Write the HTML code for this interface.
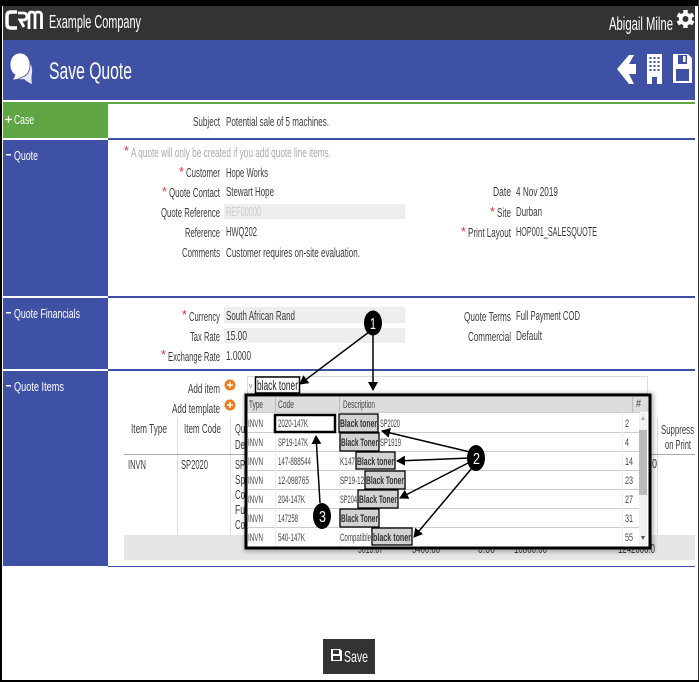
<!DOCTYPE html>
<html><head><meta charset="utf-8"><title>Save Quote</title>
<style>
html,body{margin:0;padding:0;background:#fff}
svg{display:block}
text{font-family:"Liberation Sans",sans-serif;font-size:12.5px;fill:#3c3c3c}
.w{fill:#fff}
.r{fill:#d33}
.s{font-size:11px;fill:#444}
.b{font-weight:bold;font-size:11px;fill:#333}
.n{font-size:16px;fill:#fff}
</style></head><body>
<svg width="699" height="682" viewBox="0 0 699 682" xmlns="http://www.w3.org/2000/svg">
<defs>
<marker id="a" markerWidth="9" markerHeight="11" refX="8" refY="5" orient="auto" markerUnits="userSpaceOnUse"><path d="M0 0L9 5L0 10Z" fill="#000"/></marker>
<filter id="sh" x="-5%" y="-5%" width="110%" height="110%"><feGaussianBlur stdDeviation="2"/></filter>
</defs>
<rect width="699" height="682" fill="#fff"/>
<!-- outer frame -->
<rect x="0" y="0" width="699" height="6" fill="#000"/>
<rect x="0" y="0" width="2" height="682" fill="#000"/>
<rect x="698" y="0" width="1" height="682" fill="#333"/>
<rect x="0" y="680" width="699" height="2" fill="#000"/>
<!-- header -->
<rect x="3" y="6" width="692" height="34" fill="#333"/>
<rect x="3" y="40" width="692" height="60" fill="#3f51a5"/>
<!-- logo -->
<path d="M17 12H11Q7 12 7 16V24Q7 28 11 28H17" fill="none" stroke="#fff" stroke-width="3.5"/>
<path d="M18 13H23Q27 13 27 16.500Q27 20 23 20H20L24 27" fill="none" stroke="#fff" stroke-width="2.800"/>
<path d="M29 29V15Q29 12 31.500 12Q35 12 35 15V29M35 15Q35 12 38 12Q41.500 12 41.500 15V29" fill="none" stroke="#fff" stroke-width="2.800"/>
<text class="w" x="49" y="28" style="font-size:18px" textLength="92" lengthAdjust="spacingAndGlyphs">Example Company</text>
<text class="w" x="609" y="30" style="font-size:18px" textLength="64" lengthAdjust="spacingAndGlyphs">Abigail Milne</text>
<!-- gear -->
<g transform="translate(685.5 19)" fill="#fff">
<circle r="6.5"/>
<rect x="-2.200" y="-9" width="4.400" height="18"/>
<rect x="-2.200" y="-9" width="4.400" height="18" transform="rotate(60)"/>
<rect x="-2.200" y="-9" width="4.400" height="18" transform="rotate(120)"/>
<circle r="3" fill="#333"/>
</g>
<!-- chat icon -->
<path d="M27 60Q33 65 32 73Q31 78 32 84Q27 82 24 79Q18 80 14 77Z" fill="#e4e7f4"/>
<path d="M20 53C14 53 10 58 10 65C10 70 12 73 15 75Q14 78 12 80Q18 80 22 77C27 76 30 71 30 65C30 58 26 53 20 53Z" fill="#fff" stroke="#3f51a5" stroke-width=".8"/>
<text class="w" x="49" y="79" style="font-size:24px" textLength="83" lengthAdjust="spacingAndGlyphs">Save Quote</text>
<!-- arrow -->
<path d="M617 69L629 55H634L629 64H636V74H629L634 84H629Z" fill="#fff"/>
<!-- building -->
<path d="M647 54H662V84H657V77H652V84H647Z" fill="#fff"/>
<g fill="#3f51a5"><rect x="649.500" y="57" width="2" height="2"/><rect x="653.500" y="57" width="2" height="2"/><rect x="657.500" y="57" width="2" height="2"/><rect x="649.500" y="61" width="2" height="2"/><rect x="653.500" y="61" width="2" height="2"/><rect x="657.500" y="61" width="2" height="2"/><rect x="649.500" y="65" width="2" height="2"/><rect x="653.500" y="65" width="2" height="2"/><rect x="657.500" y="65" width="2" height="2"/><rect x="649.500" y="69" width="2" height="2"/><rect x="653.500" y="69" width="2" height="2"/><rect x="657.500" y="69" width="2" height="2"/></g>
<!-- save -->
<path d="M673 54H688L692 58V83H673Z" fill="#fff"/>
<rect x="678" y="55" width="9" height="9" fill="#3f51a5"/><rect x="683" y="56" width="2.500" height="6" fill="#fff"/>
<rect x="676" y="69" width="13" height="12" fill="#3f51a5"/>
<!-- sections -->
<rect x="3" y="102" width="692" height="2" fill="#5fa544"/>
<rect x="3" y="104" width="105" height="34" fill="#5fa544"/>
<rect x="108" y="138" width="587" height="2" fill="#3f51a5"/>
<rect x="3" y="140" width="105" height="156" fill="#3f51a5"/>
<rect x="108" y="296" width="587" height="2" fill="#3f51a5"/>
<rect x="3" y="298" width="105" height="71" fill="#3f51a5"/>
<rect x="108" y="369" width="587" height="2" fill="#3f51a5"/>
<rect x="3" y="371" width="105" height="195" fill="#3f51a5"/>
<rect x="108" y="566" width="587" height="1" fill="#3f51a5"/>
<path d="M5 119.500H12M8.500 116V123" stroke="#fff" stroke-width="1.300"/>
<text class="w" x="14" y="124" textLength="20" lengthAdjust="spacingAndGlyphs">Case</text>
<rect x="6" y="154" width="5" height="1.500" fill="#fff"/>
<text class="w" x="14" y="160" textLength="24" lengthAdjust="spacingAndGlyphs">Quote</text>
<rect x="6" y="312" width="5" height="1.500" fill="#fff"/>
<text class="w" x="14" y="318" textLength="66" lengthAdjust="spacingAndGlyphs">Quote Financials</text>
<rect x="6" y="385" width="5" height="1.500" fill="#fff"/>
<text class="w" x="14" y="391" textLength="50" lengthAdjust="spacingAndGlyphs">Quote Items</text>
<!-- case -->
<text x="193" y="126" textLength="27" lengthAdjust="spacingAndGlyphs">Subject</text>
<text x="226" y="126" textLength="103" lengthAdjust="spacingAndGlyphs">Potential sale of 5 machines.</text>
<!-- quote -->
<text class="r" x="124" y="155">*</text>
<text x="131" y="157" textLength="200" lengthAdjust="spacingAndGlyphs" style="fill:#aaa">A quote will only be created if you add quote line items.</text>
<text class="r" x="179" y="176">*</text>
<text x="186" y="177" textLength="34" lengthAdjust="spacingAndGlyphs">Customer</text>
<text x="226" y="177" textLength="42" lengthAdjust="spacingAndGlyphs">Hope Works</text>
<text class="r" x="162" y="196">*</text>
<text x="169" y="197" textLength="51" lengthAdjust="spacingAndGlyphs">Quote Contact</text>
<text x="226" y="196" textLength="48" lengthAdjust="spacingAndGlyphs">Stewart Hope</text>
<rect x="224" y="204" width="181" height="15" fill="#eee"/>
<text x="161" y="217" textLength="59" lengthAdjust="spacingAndGlyphs">Quote Reference</text>
<text x="226" y="216" textLength="35" lengthAdjust="spacingAndGlyphs" style="fill:#ccc">REF00000</text>
<text x="185" y="237" textLength="35" lengthAdjust="spacingAndGlyphs">Reference</text>
<text x="226" y="236" textLength="31" lengthAdjust="spacingAndGlyphs">HWQ202</text>
<text x="182" y="257" textLength="38" lengthAdjust="spacingAndGlyphs">Comments</text>
<text x="226" y="257" textLength="134" lengthAdjust="spacingAndGlyphs">Customer requires on-site evaluation.</text>
<text x="493" y="196" textLength="18" lengthAdjust="spacingAndGlyphs">Date</text>
<text x="516" y="196" textLength="42" lengthAdjust="spacingAndGlyphs">4 Nov 2019</text>
<text class="r" x="490" y="216">*</text>
<text x="497" y="217" textLength="14" lengthAdjust="spacingAndGlyphs">Site</text>
<text x="516" y="216" textLength="26" lengthAdjust="spacingAndGlyphs">Durban</text>
<text class="r" x="461" y="236">*</text>
<text x="468" y="237" textLength="43" lengthAdjust="spacingAndGlyphs">Print Layout</text>
<text x="516" y="236" textLength="81" lengthAdjust="spacingAndGlyphs">HOP001_SALESQUOTE</text>
<!-- financials -->
<rect x="224" y="307" width="181" height="16" fill="#eee"/>
<rect x="224" y="328" width="181" height="15" fill="#eee"/>
<text class="r" x="182" y="319">*</text>
<text x="189" y="321" textLength="31" lengthAdjust="spacingAndGlyphs">Currency</text>
<text x="226" y="320" textLength="69" lengthAdjust="spacingAndGlyphs">South African Rand</text>
<text x="190" y="341" textLength="30" lengthAdjust="spacingAndGlyphs">Tax Rate</text>
<text x="226" y="340" textLength="21" lengthAdjust="spacingAndGlyphs">15.00</text>
<text class="r" x="161" y="359">*</text>
<text x="168" y="361" textLength="52" lengthAdjust="spacingAndGlyphs">Exchange Rate</text>
<text x="226" y="360" textLength="25" lengthAdjust="spacingAndGlyphs">1.0000</text>
<text x="464" y="321" textLength="47" lengthAdjust="spacingAndGlyphs">Quote Terms</text>
<text x="516" y="320" textLength="64" lengthAdjust="spacingAndGlyphs">Full Payment COD</text>
<text x="468" y="341" textLength="43" lengthAdjust="spacingAndGlyphs">Commercial</text>
<text x="516" y="340" textLength="26" lengthAdjust="spacingAndGlyphs">Default</text>
<!-- items -->
<text x="188" y="393" textLength="32" lengthAdjust="spacingAndGlyphs">Add item</text>
<text x="172" y="413" textLength="48" lengthAdjust="spacingAndGlyphs">Add template</text>
<circle cx="230" cy="385" r="5.500" fill="#ee7d1e"/><path d="M227 385H233M230 382V388" stroke="#fff" stroke-width="1.500"/>
<circle cx="230" cy="405" r="5.500" fill="#ee7d1e"/><path d="M227 405H233M230 402V408" stroke="#fff" stroke-width="1.500"/>
<rect x="247.500" y="376.500" width="400" height="17" fill="#fff" stroke="#ddd"/>
<text x="249" y="388" style="font-size:7px;fill:#888">v</text>
<rect x="255.500" y="377" width="44" height="16" fill="#fff" stroke="#000" stroke-width="1.500"/>
<text x="257" y="390" textLength="41" lengthAdjust="spacingAndGlyphs" style="font-size:13.500px;fill:#222">black toner</text>
<!-- table -->
<path d="M177.500 418V535M230.500 418V535M657.500 418V535" stroke="#ddd"/>
<path d="M124 454.500H695" stroke="#aaa"/>
<text x="131" y="433" textLength="36" lengthAdjust="spacingAndGlyphs">Item Type</text>
<text x="184" y="433" textLength="37" lengthAdjust="spacingAndGlyphs">Item Code</text>
<text x="235" y="433" textLength="10" lengthAdjust="spacingAndGlyphs">Qu</text><text x="235" y="449" textLength="10" lengthAdjust="spacingAndGlyphs">De</text>
<text x="661" y="434" textLength="33" lengthAdjust="spacingAndGlyphs">Suppress</text>
<text x="665" y="449" textLength="26" lengthAdjust="spacingAndGlyphs">on Print</text>
<text x="128" y="469" textLength="18" lengthAdjust="spacingAndGlyphs">INVN</text>
<text x="181" y="469" textLength="27" lengthAdjust="spacingAndGlyphs">SP2020</text>
<text x="235" y="469" textLength="10" lengthAdjust="spacingAndGlyphs">SP</text><text x="235" y="484" textLength="10" lengthAdjust="spacingAndGlyphs">Sp</text><text x="235" y="499" textLength="10" lengthAdjust="spacingAndGlyphs">Co</text><text x="235" y="514" textLength="10" lengthAdjust="spacingAndGlyphs">Fu</text><text x="235" y="529" textLength="10" lengthAdjust="spacingAndGlyphs">Co</text>
<rect x="124" y="535" width="571" height="25" fill="#e6e6e6"/>
<text x="652" y="468" textLength="5" lengthAdjust="spacingAndGlyphs">0</text>
<text x="358" y="553" textLength="25" lengthAdjust="spacingAndGlyphs">5010.67</text>
<text x="412" y="553" textLength="28" lengthAdjust="spacingAndGlyphs">5400.00</text>
<text x="478" y="553" textLength="17" lengthAdjust="spacingAndGlyphs">0.00</text>
<text x="514" y="553" textLength="33" lengthAdjust="spacingAndGlyphs">10800.00</text>
<text x="618" y="553" textLength="37" lengthAdjust="spacingAndGlyphs">1242000.0</text>
<!-- popup -->
<rect x="244" y="393" width="410" height="159" fill="#000" opacity=".25" filter="url(#sh)"/>
<rect x="246" y="395" width="404" height="153" fill="#fff" stroke="#000" stroke-width="3"/>
<rect x="247.500" y="397" width="401" height="15" fill="#ddd"/>
<path d="M275.500 397V412M339.500 397V412M632.500 397V412" stroke="#bbb"/>
<path d="M248 412.500H640M248 432.500H640M248 451.500H640M248 470.500H640M248 489.500H640M248 508.500H640M248 527.500H640" stroke="#ccc"/>
<path d="M275.500 412V546M339.500 412V546M622.500 412V546" stroke="#eee"/>
<text class="s" x="249" y="408" textLength="14" lengthAdjust="spacingAndGlyphs">Type</text>
<text class="s" x="278" y="408" textLength="16" lengthAdjust="spacingAndGlyphs">Code</text>
<text class="s" x="343" y="408" textLength="32" lengthAdjust="spacingAndGlyphs">Description</text>
<text class="s" x="636" y="407" textLength="5" lengthAdjust="spacingAndGlyphs">#</text>
<rect x="639" y="413" width="8" height="133" fill="#f2f2f2"/>
<rect x="639" y="430" width="8" height="65" fill="#bbb"/>
<path d="M641 420L643 416L645 420Z" fill="#aaa"/><path d="M641 536L643 540L645 536Z" fill="#555"/>
<!-- rows -->
<g>
<text class="s" x="248" y="427" textLength="15" lengthAdjust="spacingAndGlyphs">INVN</text>
<text class="s" x="248" y="446" textLength="15" lengthAdjust="spacingAndGlyphs">INVN</text>
<text class="s" x="248" y="465" textLength="15" lengthAdjust="spacingAndGlyphs">INVN</text>
<text class="s" x="248" y="484" textLength="15" lengthAdjust="spacingAndGlyphs">INVN</text>
<text class="s" x="248" y="503" textLength="15" lengthAdjust="spacingAndGlyphs">INVN</text>
<text class="s" x="248" y="522" textLength="15" lengthAdjust="spacingAndGlyphs">INVN</text>
<text class="s" x="248" y="541" textLength="15" lengthAdjust="spacingAndGlyphs">INVN</text>
<text class="s" x="278" y="427" textLength="30" lengthAdjust="spacingAndGlyphs">2020-147K</text>
<text class="s" x="278" y="446" textLength="30" lengthAdjust="spacingAndGlyphs">SP19-147K</text>
<text class="s" x="278" y="465" textLength="33" lengthAdjust="spacingAndGlyphs">147-888544</text>
<text class="s" x="278" y="484" textLength="31" lengthAdjust="spacingAndGlyphs">12-098765</text>
<text class="s" x="278" y="503" textLength="27" lengthAdjust="spacingAndGlyphs">204-147K</text>
<text class="s" x="278" y="522" textLength="20" lengthAdjust="spacingAndGlyphs">147258</text>
<text class="s" x="278" y="541" textLength="27" lengthAdjust="spacingAndGlyphs">540-147K</text>
<text class="s" x="625" y="427" textLength="4" lengthAdjust="spacingAndGlyphs">2</text><text class="s" x="625" y="446" textLength="4" lengthAdjust="spacingAndGlyphs">4</text><text class="s" x="625" y="465" textLength="8" lengthAdjust="spacingAndGlyphs">14</text><text class="s" x="625" y="484" textLength="8" lengthAdjust="spacingAndGlyphs">23</text><text class="s" x="625" y="503" textLength="8" lengthAdjust="spacingAndGlyphs">27</text><text class="s" x="625" y="522" textLength="8" lengthAdjust="spacingAndGlyphs">31</text><text class="s" x="625" y="541" textLength="8" lengthAdjust="spacingAndGlyphs">55</text>
<g fill="#d2d2d2" stroke="#000" stroke-width="1.300">
<rect x="339" y="414" width="39" height="18"/>
<rect x="340" y="433" width="39" height="18"/>
<rect x="356" y="452" width="39" height="17"/>
<rect x="365" y="471" width="40" height="18"/>
<rect x="358" y="490" width="40" height="18"/>
<rect x="340" y="509" width="39" height="18"/>
<rect x="372" y="528" width="40" height="17"/>
</g>
<text class="b" x="340" y="427" textLength="37" lengthAdjust="spacingAndGlyphs">Black toner</text>
<text class="b" x="341" y="446" textLength="37" lengthAdjust="spacingAndGlyphs">Black Toner</text>
<text class="b" x="357" y="465" textLength="37" lengthAdjust="spacingAndGlyphs">Black toner</text>
<text class="b" x="366" y="484" textLength="38" lengthAdjust="spacingAndGlyphs">Black Toner</text>
<text class="b" x="359" y="503" textLength="38" lengthAdjust="spacingAndGlyphs">Black Toner</text>
<text class="b" x="341" y="522" textLength="37" lengthAdjust="spacingAndGlyphs">Black Toner</text>
<text class="b" x="373" y="541" textLength="38" lengthAdjust="spacingAndGlyphs">black toner</text>
<text class="s" x="380" y="427" textLength="20" lengthAdjust="spacingAndGlyphs">SP2020</text>
<text class="s" x="380" y="446" textLength="21" lengthAdjust="spacingAndGlyphs">SP1919</text>
<text class="s" x="340" y="465" textLength="15" lengthAdjust="spacingAndGlyphs">K147</text>
<text class="s" x="340" y="484" textLength="24" lengthAdjust="spacingAndGlyphs">SP19-12</text>
<text class="s" x="340" y="503" textLength="17" lengthAdjust="spacingAndGlyphs">SP204</text>
<text class="s" x="340" y="541" textLength="31" lengthAdjust="spacingAndGlyphs">Compatible</text>
</g>
<rect x="275" y="415" width="60" height="17" fill="none" stroke="#000" stroke-width="2.500"/>
<!-- callouts -->
<g stroke="#000" stroke-width="1.500" fill="none">
<path d="M369 332L300 384" marker-end="url(#a)"/>
<path d="M373 335V390" marker-end="url(#a)"/>
<path d="M470 452L382 431" marker-end="url(#a)"/>
<path d="M470 458L397 461" marker-end="url(#a)"/>
<path d="M470 462L400 498" marker-end="url(#a)"/>
<path d="M472 468L414 537" marker-end="url(#a)"/>
<path d="M320 503L316 436" marker-end="url(#a)"/>
</g>
<ellipse cx="373" cy="323" rx="9" ry="12.500" fill="#000"/>
<text class="n" x="370" y="329" textLength="6" lengthAdjust="spacingAndGlyphs">1</text>
<ellipse cx="476" cy="458" rx="9" ry="13" fill="#000"/>
<text class="n" x="473" y="464" textLength="7" lengthAdjust="spacingAndGlyphs">2</text>
<ellipse cx="322" cy="516" rx="9" ry="13" fill="#000"/>
<text class="n" x="319" y="522" textLength="7" lengthAdjust="spacingAndGlyphs">3</text>
<!-- save button -->
<rect x="323" y="639" width="52" height="35" fill="#333"/>
<path d="M331 649H340L342 651V661H331Z" fill="#fff"/>
<rect x="333" y="650" width="6" height="4" fill="#333"/><rect x="333" y="656" width="7" height="4" fill="#333"/>
<text class="w" x="344" y="662" style="font-size:16px" textLength="24" lengthAdjust="spacingAndGlyphs">Save</text>
</svg>
</body></html>
